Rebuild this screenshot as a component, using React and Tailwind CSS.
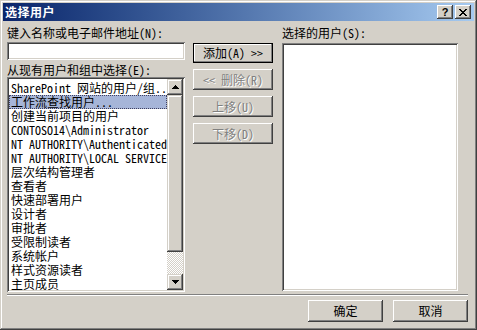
import React from "react";

const items = [
  "SharePoint 网站的用户/组..",
  "工作流查找用户...",
  "创建当前项目的用户",
  "CONTOSO14\\Administrator",
  "NT AUTHORITY\\Authenticated",
  "NT AUTHORITY\\LOCAL SERVICE",
  "层次结构管理者",
  "查看者",
  "快速部署用户",
  "设计者",
  "审批者",
  "受限制读者",
  "系统帐户",
  "样式资源读者",
  "主页成员",
];

function Arrow({ up }) {
  return (
    <svg width="7" height="4" viewBox="0 0 7 4" className="block">
      {up ? (
        <path d="M3 0h1v1h1v1h1v1h1v1H0V3h1V2h1V1h1z" fill="#000" />
      ) : (
        <path d="M0 0h7v1H6v1H5v1H4v1H3V3H2V2H1V1H0z" fill="#000" />
      )}
    </svg>
  );
}

function Btn({ children, disabled, isDefault, className }) {
  return (
    <div
      className={
        "flex items-center justify-center bg-[#d4d0c8] text-[12px] leading-none " +
        (isDefault
          ? "shadow-[inset_0_0_0_1px_#000,inset_-2px_-2px_#808080,inset_2px_2px_#fff] "
          : "shadow-[inset_-1px_-1px_#404040,inset_1px_1px_#fff,inset_-2px_-2px_#808080,inset_2px_2px_#d4d0c8] ") +
        (disabled ? "text-[#808080] [text-shadow:1px_1px_0_#fff] " : "text-black ") +
        className
      }
    >
      {children}
    </div>
  );
}

export default function App() {
  return (
    <div className="w-[477px] h-[330px] bg-[#d4d0c8] p-[3px] shadow-[inset_-1px_-1px_#404040,inset_1px_1px_#d4d0c8,inset_-2px_-2px_#808080,inset_2px_2px_#fff] font-['Noto_Sans_Mono_CJK_SC','Noto_Sans_CJK_SC',monospace] text-black overflow-hidden">
      {/* Title bar */}
      <div className="h-[18px] flex items-center bg-gradient-to-r from-[#0a246a] to-[#a6caf0] pl-[2px] pr-[3px]">
        <span className="text-white font-bold text-[12px] leading-none tracking-[0.5px] font-['Noto_Sans_CJK_SC',sans-serif]">
          选择用户
        </span>
        <div className="ml-auto flex gap-[2px]">
          <div className="w-[16px] h-[14px] bg-[#d4d0c8] shadow-[inset_-1px_-1px_#404040,inset_1px_1px_#fff,inset_-2px_-2px_#808080,inset_2px_2px_#d4d0c8] flex items-center justify-center">
            <span className="text-[11px] font-bold leading-none font-['Liberation_Sans',sans-serif] pt-[1px]">?</span>
          </div>
          <div className="w-[16px] h-[14px] bg-[#d4d0c8] shadow-[inset_-1px_-1px_#404040,inset_1px_1px_#fff,inset_-2px_-2px_#808080,inset_2px_2px_#d4d0c8] flex items-center justify-center">
            <svg width="8" height="7" viewBox="0 0 8 7" className="block">
              <path d="M0 0h2v1h1v1h2V1h1V0h2v1H7v1H6v1H5v1h1v1h1v1h1v1H6V6H5V5H3v1H2v1H0V6h1V5h1V4h1V3H2V2H1V1H0z" fill="#000" />
            </svg>
          </div>
        </div>
      </div>

      {/* Body */}
      <div className="flex pl-[4px] pt-[4px]">
        {/* Left column */}
        <div className="w-[178px] flex flex-col">
          <div className="h-[17px] text-[12px] leading-[14px] pt-[1px]">键入名称或电子邮件地址(N):</div>
          <div className="h-[18px] bg-white shadow-[inset_1px_1px_#808080,inset_-1px_-1px_#fff,inset_2px_2px_#404040,inset_-2px_-2px_#d4d0c8]" />
          <div className="h-[17px] text-[12px] leading-[14px] pt-[3px]">从现有用户和组中选择(E):</div>
          <div className="h-[215px] bg-white p-[2px] flex shadow-[inset_1px_1px_#808080,inset_-1px_-1px_#fff,inset_2px_2px_#404040,inset_-2px_-2px_#d4d0c8]">
            <div className="flex-1 overflow-hidden pt-[2px]">
              {items.map((t, i) => (
                <div
                  key={i}
                  className={
                    "h-[14px] text-[12px] leading-[14px] pl-[2px] whitespace-nowrap " +
                    (i === 1 ? "bg-[#a6b5d8] outline outline-1 outline-dotted outline-[#404060] -outline-offset-1" : "")
                  }
                >
                  {t}
                </div>
              ))}
            </div>
            <div className="w-[16px] flex flex-col">
              <div className="h-[16px] bg-[#d4d0c8] shadow-[inset_-1px_-1px_#404040,inset_1px_1px_#d4d0c8,inset_-2px_-2px_#808080,inset_2px_2px_#fff] flex items-center justify-center">
                <Arrow up />
              </div>
              <div className="h-[157px] bg-[#d4d0c8] shadow-[inset_-1px_-1px_#404040,inset_1px_1px_#d4d0c8,inset_-2px_-2px_#808080,inset_2px_2px_#fff]" />
              <div className="flex-1 bg-[repeating-conic-gradient(#fff_0%_25%,#d4d0c8_0%_50%)] bg-[length:2px_2px]" />
              <div className="h-[16px] bg-[#d4d0c8] shadow-[inset_-1px_-1px_#404040,inset_1px_1px_#d4d0c8,inset_-2px_-2px_#808080,inset_2px_2px_#fff] flex items-center justify-center">
                <Arrow />
              </div>
            </div>
          </div>
        </div>

        {/* Middle buttons */}
        <div className="w-[80px] ml-[8px] flex flex-col pt-[18px] gap-[6px]">
          <Btn isDefault className="h-[20px]">添加(A) &gt;&gt;</Btn>
          <Btn disabled className="h-[21px]">&lt;&lt; 删除(R)</Btn>
          <Btn disabled className="h-[21px]">上移(U)</Btn>
          <Btn disabled className="h-[21px]">下移(D)</Btn>
        </div>

        {/* Right column */}
        <div className="w-[176px] ml-[9px] flex flex-col">
          <div className="h-[18px] text-[12px] leading-[14px] pt-[1px]">选择的用户(S):</div>
          <div className="h-[248px] bg-white shadow-[inset_1px_1px_#808080,inset_-1px_-1px_#fff,inset_2px_2px_#404040,inset_-2px_-2px_#d4d0c8]" />
        </div>
      </div>

      {/* Separator */}
      <div className="ml-[4px] mr-[6px] mt-[2px] h-[2px] border-t border-[#808080] border-b border-b-white" />

      {/* Bottom buttons */}
      <div className="flex justify-end gap-[10px] mr-[6px] mt-[4px]">
        <Btn className="w-[75px] h-[22px]">确定</Btn>
        <Btn className="w-[75px] h-[22px]">取消</Btn>
      </div>
    </div>
  );
}
